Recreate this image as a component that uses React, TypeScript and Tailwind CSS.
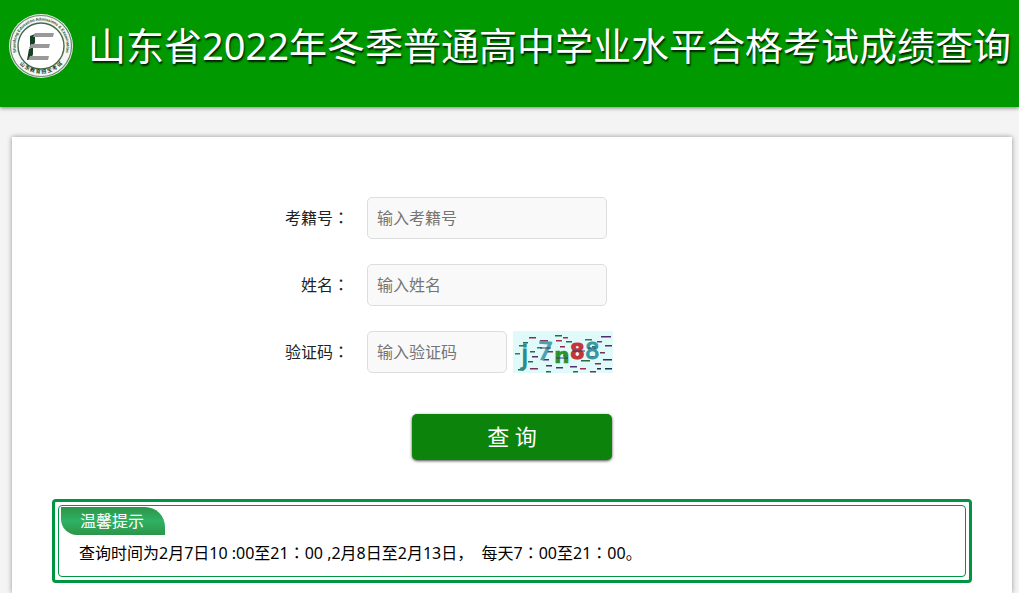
import React from "react";

const Colon = () => (
  <span className="font-['Noto_Sans_CJK_TC',sans-serif]" lang="zh-TW">
    ：
  </span>
);

const Logo = () => (
  <svg
    className="h-[66px] w-[66px] shrink-0"
    viewBox="0 0 66 66"
    role="img"
    aria-label="山东教育招生考试"
  >
    <defs>
      <path id="ring-top" d="M 9 42 A 25.6 25.6 0 1 1 57 42" />
      <path id="ring-bottom" d="M 5 38 A 28.7 28.7 0 0 0 61 38" />
    </defs>
    <circle cx="33" cy="33" r="32" fill="#e9f1e8" />
    <circle cx="33" cy="33" r="30.5" fill="#f4f6f4" stroke="#6f8873" strokeWidth="1.2" />
    <circle cx="33" cy="33" r="23" fill="#fff" stroke="#456a4b" strokeWidth="1.4" />
    <text fontSize="4" fontWeight="700" fill="#234d2b" fontFamily="Liberation Sans, sans-serif">
      <textPath href="#ring-top" startOffset="50%" textAnchor="middle">
        Shandong Education Admissions &amp; Examination
      </textPath>
    </text>
    <text fontSize="5" fontWeight="700" fill="#173d20" fontFamily="Noto Sans CJK SC, sans-serif">
      <textPath href="#ring-bottom" startOffset="50%" textAnchor="middle">
        山 东 教 育 招 生 考 试
      </textPath>
    </text>
    <path d="M22 23 l5 -2 v9 l-5 5 z" fill="#173f24" />
    <path d="M21 36 l4 -2 v7 l-2 6 h-4 z" fill="#173f24" />
    <path d="M27 20 h19 l-1 4 h-20 z" fill="#999" />
    <path d="M23 31 h19 l-1 4 h-20 z" fill="#999" />
    <path d="M22 43 h19 l-1 4 h-20 z" fill="#999" />
  </svg>
);

// [x, y, length, colour]
const noise: [number, number, number, string][] = [
  [16, 6, 7, "#743457"], [42, 4, 7, "#246f40"], [50, 6, 5, "#a32c54"],
  [72, 8, 7, "#257a54"], [88, 5, 10, "#50306f"], [27, 9, 8, "#7d3468"],
  [10, 11, 5, "#276e58"], [43, 9, 6, "#a32c54"], [53, 10, 6, "#246f40"],
  [84, 10, 5, "#713870"], [92, 14, 7, "#50306f"], [6, 14, 6, "#2f6c70"],
  [24, 16, 5, "#2e7b6e"], [47, 15, 5, "#892b46"], [79, 15, 6, "#257a54"],
  [17, 20, 5, "#246f40"], [33, 20, 7, "#743457"], [87, 21, 5, "#743457"],
  [2, 22, 5, "#2e7b6e"], [19, 25, 6, "#50306f"], [50, 24, 5, "#246f40"],
  [76, 25, 6, "#8b3168"], [90, 28, 9, "#3b2f50"], [30, 28, 6, "#50306f"],
  [15, 30, 5, "#276e58"], [68, 29, 9, "#246f40"], [82, 32, 6, "#743457"],
  [33, 34, 6, "#50306f"], [43, 36, 7, "#50306f"], [57, 35, 7, "#50306f"],
  [67, 37, 6, "#a32c54"], [17, 37, 8, "#743457"], [5, 38, 6, "#246f40"],
  [84, 37, 4, "#202f40"], [92, 37, 7, "#202f50"], [33, 40, 5, "#246f40"],
  [60, 40, 5, "#246f40"], [77, 40, 6, "#743457"],
];

const Captcha = () => (
  <svg className="h-[42px] w-[100px] shrink-0" viewBox="0 0 100 42" role="img" aria-label="验证码图片">
    <rect width="100" height="42" fill="#e0fafa" />
    {noise.map(([x, y, w, color]) => (
      <rect key={`${x}-${y}`} x={x} y={y} width={w} height="1.5" fill={color} />
    ))}
    <g fontFamily="DejaVu Sans, sans-serif" fontWeight="700">
      <text x="8" y="33" fontSize="27" fontWeight="400" fill="#288c8b" stroke="#288c8b">j</text>
      <text x="24" y="29" fontSize="25" fontWeight="400" fill="#4aa1b1" stroke="#4aa1b1" transform="rotate(5 32 20)">7</text>
      <text x="41" y="32" fontSize="22" fill="#2c902c" stroke="#2c902c" strokeWidth="0.5">n</text>
      <text x="57" y="28" fontSize="21" fill="#c3343b" stroke="#c3343b">8</text>
      <text x="72" y="28" fontSize="23" fontWeight="400" fill="#3997a4" stroke="#3997a4">8</text>
    </g>
    <path d="M27 17h11M43 27h12M59 20h13M75 17h8" stroke="#3d3567" strokeWidth="1" />
  </svg>
);

interface FieldProps {
  id: string;
  label: string;
  placeholder: string;
  short?: boolean;
  children?: React.ReactNode;
}

const Field = ({ id, label, placeholder, short, children }: FieldProps) => (
  <div className="flex items-center">
    <label htmlFor={id} className="mr-[18px] w-[137px] pb-[2px] text-right text-[#222]">
      {label}
      <Colon />
    </label>
    <input
      id={id}
      name={id}
      type="text"
      placeholder={placeholder}
      className={`h-[42px] rounded-[5px] border border-[#ddd] bg-[#f9f9f9] px-[9px] placeholder:text-[#757575] ${
        short ? "w-[140px]" : "w-60"
      }`}
    />
    {children}
  </div>
);

const App = () => {
  return (
    <div className="flex min-h-screen flex-col bg-[#f4f4f4] font-['Noto_Sans','Noto_Sans_CJK_SC',sans-serif] text-base" lang="zh-CN">
      <header className="flex h-[107px] items-start bg-[#090] pl-2 pt-[13px] shadow-[0_1px_4px_rgba(0,0,0,0.5)]">
        <Logo />
        <h1 className="ml-[14px] mt-[7px] whitespace-nowrap text-[38px] leading-[50px] font-normal text-white [text-shadow:1px_2px_2px_rgba(0,0,0,0.8)]">
          山东省2022年冬季普通高中学业水平合格考试成绩查询
        </h1>
      </header>

      <main className="ml-3 mr-[7px] mt-[30px] flex-1 bg-white px-10 pb-[10px] pt-[60px] shadow-[0_0_5px_rgba(0,0,0,0.4)]">
        <form className="mx-auto flex max-w-[600px] flex-col gap-[25px]">
          <Field id="candidate" label="考籍号" placeholder="输入考籍号" />
          <Field id="fullname" label="姓名" placeholder="输入姓名" />
          <Field id="captcha" label="验证码" placeholder="输入验证码" short>
            <button type="button" className="ml-[6px]" aria-label="刷新验证码">
              <Captcha />
            </button>
          </Field>
          <button
            type="submit"
            className="mx-auto mt-4 h-[46px] w-[200px] rounded-[5px] bg-[#0c840c] pb-[2px] text-[22px] text-white shadow-[0_1px_3px_rgba(0,0,0,0.7)]"
          >
            查 询
          </button>
        </form>

        <section className="mt-[39px] rounded-[4px] border-[3px] border-[#009540] p-[3px]">
          <div className="min-h-[72px] rounded-[4px] border border-[#009540] px-[2px] pt-px">
            <h2 className="h-7 w-[104px] rounded-tr-[20px] rounded-bl-[16px] bg-linear-to-b from-[#2c9548] via-[#2fb163] to-[#2c9548] pl-[19px] leading-7 text-white">
              温馨提示
            </h2>
            <p className="pl-[18px] pt-[5px] leading-6 text-black">
              查询时间为2月7日10 :00至21
              <Colon />
              00 ,2月8日至2月13日，&nbsp; 每天7
              <Colon />
              00至21
              <Colon />
              00。
            </p>
          </div>
        </section>
      </main>
    </div>
  );
};

export default App;
